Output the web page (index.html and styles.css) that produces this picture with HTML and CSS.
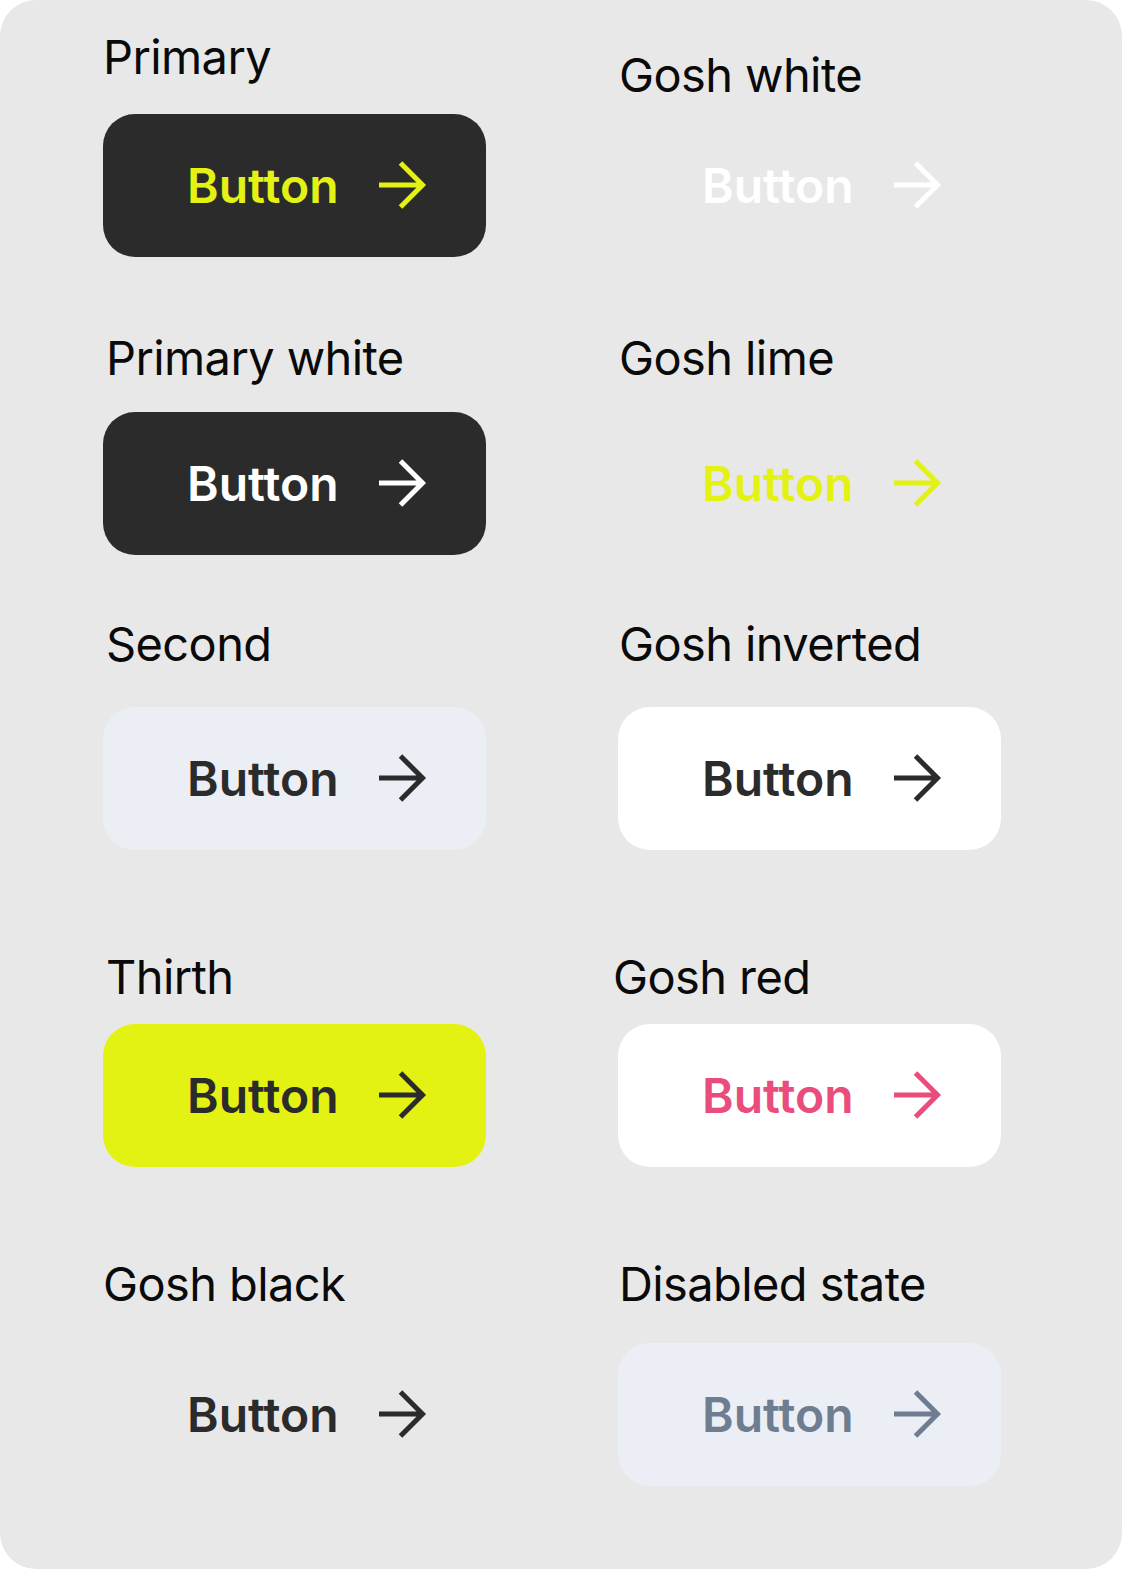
FILE: index.html
```html
<!DOCTYPE html>
<html lang="en">
<head>
<meta charset="utf-8">
<title>Buttons</title>
<link rel="stylesheet" href="styles.css">
</head>
<body>
<main class="card">
  <section class="row row-1">
    <div class="cell">
      <div class="label lbl-primary">Primary</div>
      <button class="btn btn-primary"><span class="btn-text">Button</span><svg class="arrow" viewBox="0 0 50 50" width="50" height="50"><path d="M0 24H44M21.5 2L43.5 24L21.5 46"/></svg></button>
    </div>
    <div class="cell">
      <div class="label lbl-gosh-white">Gosh white</div>
      <button class="btn btn-gosh-white"><span class="btn-text">Button</span><svg class="arrow" viewBox="0 0 50 50" width="50" height="50"><path d="M0 24H44M21.5 2L43.5 24L21.5 46"/></svg></button>
    </div>
  </section>
  <section class="row row-2">
    <div class="cell">
      <div class="label lbl-l2">Primary white</div>
      <button class="btn btn-primary-white"><span class="btn-text">Button</span><svg class="arrow" viewBox="0 0 50 50" width="50" height="50"><path d="M0 24H44M21.5 2L43.5 24L21.5 46"/></svg></button>
    </div>
    <div class="cell">
      <div class="label lbl-r2">Gosh lime</div>
      <button class="btn btn-gosh-lime"><span class="btn-text">Button</span><svg class="arrow" viewBox="0 0 50 50" width="50" height="50"><path d="M0 24H44M21.5 2L43.5 24L21.5 46"/></svg></button>
    </div>
  </section>
  <section class="row row-3">
    <div class="cell">
      <div class="label lbl-l3">Second</div>
      <button class="btn btn-second"><span class="btn-text">Button</span><svg class="arrow" viewBox="0 0 50 50" width="50" height="50"><path d="M0 24H44M21.5 2L43.5 24L21.5 46"/></svg></button>
    </div>
    <div class="cell">
      <div class="label lbl-r3">Gosh inverted</div>
      <button class="btn btn-gosh-inverted"><span class="btn-text">Button</span><svg class="arrow" viewBox="0 0 50 50" width="50" height="50"><path d="M0 24H44M21.5 2L43.5 24L21.5 46"/></svg></button>
    </div>
  </section>
  <section class="row row-4">
    <div class="cell">
      <div class="label lbl-l4">Thirth</div>
      <button class="btn btn-thirth"><span class="btn-text">Button</span><svg class="arrow" viewBox="0 0 50 50" width="50" height="50"><path d="M0 24H44M21.5 2L43.5 24L21.5 46"/></svg></button>
    </div>
    <div class="cell">
      <div class="label lbl-r4">Gosh red</div>
      <button class="btn btn-gosh-red"><span class="btn-text">Button</span><svg class="arrow" viewBox="0 0 50 50" width="50" height="50"><path d="M0 24H44M21.5 2L43.5 24L21.5 46"/></svg></button>
    </div>
  </section>
  <section class="row row-5">
    <div class="cell">
      <div class="label lbl-l5">Gosh black</div>
      <button class="btn btn-gosh-black"><span class="btn-text">Button</span><svg class="arrow" viewBox="0 0 50 50" width="50" height="50"><path d="M0 24H44M21.5 2L43.5 24L21.5 46"/></svg></button>
    </div>
    <div class="cell">
      <div class="label lbl-r5">Disabled state</div>
      <button class="btn btn-disabled" disabled><span class="btn-text">Button</span><svg class="arrow" viewBox="0 0 50 50" width="50" height="50"><path d="M0 24H44M21.5 2L43.5 24L21.5 46"/></svg></button>
    </div>
  </section>
</main>
</body>
</html>
```
FILE: styles.css
```css
* {
  box-sizing: border-box;
}

html, body {
  margin: 0;
  padding: 0;
  background: #ffffff;
}

body {
  font-family: Inter, "Noto Sans", sans-serif;
}

.card {
  width: 1122px;
  height: 1569px;
  background: #e8e8e8;
  border-radius: 36px;
  padding: 28px 0 0 103px;
  display: flex;
  flex-direction: column;
}

.row {
  display: grid;
  grid-template-columns: 383px 383px;
  column-gap: 132px;
  align-items: end;
}

.row-2 { margin-top: 72px; }
.row-3 { margin-top: 60px; }
.row-4 { margin-top: 98px; }
.row-5 { margin-top: 88px; }

.cell {
  display: flex;
  flex-direction: column;
}

.label {
  font-size: 47px;
  line-height: 58px;
  font-weight: 400;
  color: #0a0a0a;
  letter-spacing: -0.6px;
}

.lbl-primary { margin-bottom: 28px; margin-left: 0; }
.lbl-gosh-white { margin-bottom: 10px; margin-left: 1px; }
.lbl-l2 { margin-bottom: 25px; margin-left: 3px; }
.lbl-r2 { margin-bottom: 25px; margin-left: 1px; }
.lbl-l3 { margin-bottom: 34px; margin-left: 3px; }
.lbl-r3 { margin-bottom: 34px; margin-left: 1px; }
.lbl-l4 { margin-bottom: 18px; margin-left: 3px; }
.lbl-r4 { margin-bottom: 18px; margin-left: -5px; }
.lbl-l5 { margin-bottom: 30px; margin-left: 0; }
.lbl-r5 { margin-bottom: 30px; margin-left: 1px; }

.btn {
  width: 383px;
  height: 143px;
  border: none;
  border-radius: 32px;
  padding: 0 0 0 84px;
  margin: 0;
  display: flex;
  align-items: center;
  gap: 40px;
  font-family: Inter, "Noto Sans", sans-serif;
  font-size: 48px;
  font-weight: 600;
  background: transparent;
  cursor: pointer;
}

.btn-text {
  line-height: 58px;
}

.arrow {
  display: block;
  flex: none;
}

.arrow path {
  fill: none;
  stroke: currentColor;
  stroke-width: 5;
  stroke-linejoin: miter;
  stroke-linecap: butt;
}

.btn-primary {
  background: #2b2b2b;
  color: #e4f213;
}

.btn-gosh-white {
  color: #ffffff;
}

.btn-primary-white {
  background: #2b2b2b;
  color: #ffffff;
}

.btn-gosh-lime {
  color: #e4f213;
}

.btn-second {
  background: #eceef5;
  color: #2b2b2b;
}

.btn-gosh-inverted {
  background: #ffffff;
  color: #2b2b2b;
}

.btn-thirth {
  background: #e4f213;
  color: #2b2b2b;
}

.btn-gosh-red {
  background: #ffffff;
  color: #ea4c7c;
}

.btn-gosh-black {
  color: #2b2b2b;
}

.btn-disabled {
  background: #eceef5;
  color: #6e7d8f;
  cursor: default;
}
```
